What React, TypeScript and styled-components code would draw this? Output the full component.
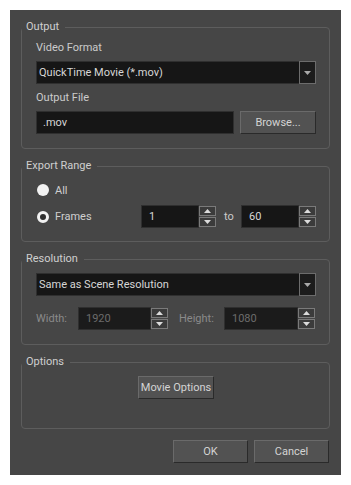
import React from "react";
import styled, { createGlobalStyle } from "styled-components";

const Global = createGlobalStyle`
  body {
    margin: 0;
    background: #ffffff;
    font-family: Roboto, "Liberation Sans", sans-serif;
    font-size: 11px;
    color: #cfcfcf;
  }
`;

const Dialog = styled.div`
  margin: 10px;
  width: 331px;
  height: 465px;
  box-sizing: border-box;
  background: #464646;
  padding: 11px;
  display: flex;
  flex-direction: column;
  gap: 11px;
  white-space: nowrap;
`;

const Group = styled.fieldset`
  margin: 0;
  padding: 0;
  min-inline-size: 0;
  border: 1px solid #5d5d5d;
  border-radius: 4px;
`;

const Legend = styled.legend`
  margin: 0;
  padding: 0 6px 0 4px;
  line-height: 12px;
  height: 12px;
  color: #cfcfcf;
`;

const Body = styled.div<{ $top?: number; $bottom?: number; $gap?: number; $center?: boolean }>`
  display: flex;
  flex-direction: column;
  align-items: ${(p) => (p.$center ? "center" : "stretch")};
  gap: ${(p) => p.$gap ?? 6}px;
  padding: ${(p) => p.$top ?? 8}px 13px ${(p) => p.$bottom ?? 14}px 14px;
`;

const Label = styled.div<{ $top?: number }>`
  height: 14px;
  line-height: 14px;
  margin-top: ${(p) => p.$top ?? 0}px;
  color: #cbcbcb;
`;

const Combo = styled.div`
  height: 23px;
  box-sizing: border-box;
  display: flex;
  background: #161616;
  border: 1px solid #2f2f2f;
  color: #d6d6d6;
`;

const ComboText = styled.div`
  flex: 1;
  padding-left: 2px;
  line-height: 21px;
`;

const ComboArrow = styled.div`
  width: 17px;
  box-sizing: border-box;
  margin: -1px -1px -1px 0;
  border: 1px solid #6c6c6c;
  background: #1c1c1c;
  display: flex;
  align-items: center;
  justify-content: center;
`;

const Row = styled.div<{ $gap?: number }>`
  display: flex;
  align-items: center;
  gap: ${(p) => p.$gap ?? 0}px;
`;

const TextField = styled.div`
  flex: 1;
  height: 23px;
  box-sizing: border-box;
  background: #161616;
  border: 1px solid #2f2f2f;
  padding-left: 6px;
  line-height: 21px;
  color: #d6d6d6;
`;

const Button = styled.div<{ $width: number }>`
  width: ${(p) => p.$width}px;
  height: 23px;
  box-sizing: border-box;
  background: #525252;
  border: 1px solid;
  border-color: #6a6a6a #2a2a2a #2a2a2a #6a6a6a;
  text-align: center;
  line-height: 21px;
  color: #d4d4d4;
`;

const RadioRow = styled.div`
  display: flex;
  align-items: center;
  height: 22px;
`;

const RadioChoice = styled.div<{ $width?: number }>`
  display: flex;
  align-items: center;
  gap: 6px;
  padding-left: 1px;
  width: ${(p) => (p.$width ? `${p.$width}px` : "auto")};
  box-sizing: border-box;
`;

const RadioDot = styled.span<{ $filled?: boolean }>`
  width: 12px;
  height: 12px;
  box-sizing: border-box;
  border-radius: 50%;
  background: ${(p) => (p.$filled ? "#f2f2f2" : "#2e2e2e")};
  border: ${(p) => (p.$filled ? "none" : "3px solid #f2f2f2")};
`;

const Spin = styled.div<{ $width: number }>`
  width: ${(p) => p.$width}px;
  height: 23px;
  display: flex;
`;

const SpinField = styled.div<{ $disabled?: boolean }>`
  flex: 1;
  box-sizing: border-box;
  background: ${(p) => (p.$disabled ? "#1b1b1b" : "#161616")};
  border: 1px solid #2f2f2f;
  padding-left: 7px;
  line-height: 21px;
  color: ${(p) => (p.$disabled ? "#6c6c6c" : "#d6d6d6")};
`;

const SpinButtons = styled.div`
  width: 17px;
  display: flex;
  flex-direction: column;
  gap: 1px;
  padding: 1px 0;
  box-sizing: border-box;
`;

const SpinButton = styled.div`
  flex: 1;
  box-sizing: border-box;
  border: 1px solid #7a7a7a;
  background: #3b3b3b;
  display: flex;
  align-items: center;
  justify-content: center;
`;

const FieldLabel = styled.div<{ $width: number; $indent?: number; $dim?: boolean }>`
  width: ${(p) => p.$width}px;
  padding-left: ${(p) => p.$indent ?? 0}px;
  box-sizing: border-box;
  color: ${(p) => (p.$dim ? "#8a8a8a" : "#cbcbcb")};
`;

const Footer = styled.div`
  display: flex;
  justify-content: flex-end;
  gap: 6px;
  padding-right: 1px;
`;

const Arrow = ({ up, color }: { up?: boolean; color: string }) => (
  <svg width="7" height="4" viewBox="0 0 7 4">
    <polygon points={up ? "0,4 7,4 3.5,0" : "0,0 7,0 3.5,4"} fill={color} />
  </svg>
);

const SpinBox = ({ value, width, disabled }: { value: string; width: number; disabled?: boolean }) => (
  <Spin $width={width}>
    <SpinField $disabled={disabled}>{value}</SpinField>
    <SpinButtons>
      <SpinButton>
        <Arrow up color="#dcdcdc" />
      </SpinButton>
      <SpinButton>
        <Arrow color="#dcdcdc" />
      </SpinButton>
    </SpinButtons>
  </Spin>
);

const ComboBox = ({ value }: { value: string }) => (
  <Combo>
    <ComboText>{value}</ComboText>
    <ComboArrow>
      <Arrow color="#a9a9a9" />
    </ComboArrow>
  </Combo>
);

function App() {
  return (
    <>
      <Global />
      <Dialog>
        <Group>
          <Legend>Output</Legend>
          <Body $bottom={14}>
            <Label>Video Format</Label>
            <ComboBox value="QuickTime Movie (*.mov)" />
            <Label $top={1}>Output File</Label>
            <Row $gap={6}>
              <TextField>.mov</TextField>
              <Button $width={76}>Browse...</Button>
            </Row>
          </Body>
        </Group>

        <Group>
          <Legend>Export Range</Legend>
          <Body $top={7} $bottom={13} $gap={4}>
            <RadioRow>
              <RadioChoice>
                <RadioDot $filled />
                All
              </RadioChoice>
            </RadioRow>
            <Row>
              <RadioChoice $width={105}>
                <RadioDot />
                Frames
              </RadioChoice>
              <SpinBox value="1" width={75} />
              <FieldLabel $width={25} $indent={8}>
                to
              </FieldLabel>
              <SpinBox value="60" width={75} />
            </Row>
          </Body>
        </Group>

        <Group>
          <Legend>Resolution</Legend>
          <Body $gap={11}>
            <ComboBox value="Same as Scene Resolution" />
            <Row>
              <FieldLabel $width={42} $dim>
                Width:
              </FieldLabel>
              <SpinBox value="1920" width={90} disabled />
              <FieldLabel $width={56} $indent={11} $dim>
                Height:
              </FieldLabel>
              <SpinBox value="1080" width={91} disabled />
            </Row>
          </Body>
        </Group>

        <Group>
          <Legend>Options</Legend>
          <Body $bottom={29} $center>
            <Button $width={76}>Movie Options</Button>
          </Body>
        </Group>

        <Footer>
          <Button $width={75}>OK</Button>
          <Button $width={75}>Cancel</Button>
        </Footer>
      </Dialog>
    </>
  );
}

export default App;
